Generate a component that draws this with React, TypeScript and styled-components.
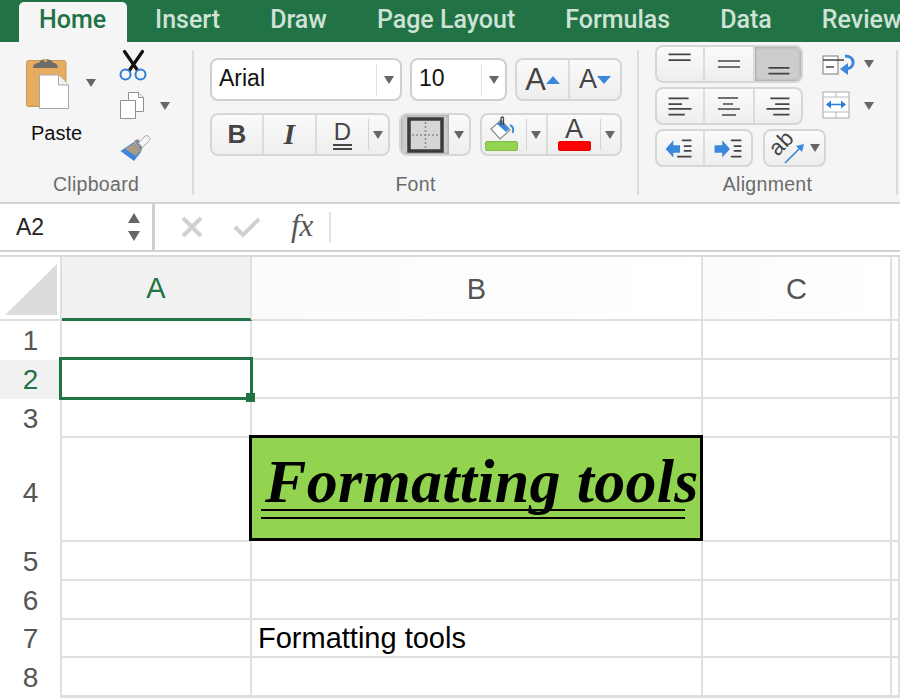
import React, { FC, Fragment } from 'react';
import styled, { createGlobalStyle } from 'styled-components';

const green = '#217346';
const UI_FONT = '"Liberation Sans", Arial, sans-serif';

const GlobalStyle = createGlobalStyle`
    html, body {
        margin: 0;
        padding: 0;
        background: #fff;
    }
    * {
        box-sizing: border-box;
    }
`;

const Page = styled.div`
    width: 900px;
    height: 698px;
    overflow: hidden;
    display: flex;
    flex-direction: column;
    font-family: ${UI_FONT};
    background: #fff;
`;

/* tabs */
const TabBar = styled.div`
    height: 42px;
    flex: none;
    background: ${green};
    display: flex;
    align-items: flex-end;
    padding-left: 19px;
    white-space: nowrap;
`;

const Tab = styled.div<{ $active?: boolean }>`
    height: ${p => (p.$active ? '40px' : '42px')};
    line-height: ${p => (p.$active ? '35px' : '40px')};
    font-family: Roboto, ${UI_FONT};
    font-size: 25px;
    font-weight: 500;
    flex: none;
    padding: 0 ${p => (p.$active ? '21px 0 20px' : '0')};
    margin-right: ${p => (p.$active ? '28px' : '50px')};
    color: ${p => (p.$active ? green : '#cfe2d6')};
    background: ${p => (p.$active ? '#f5f5f5' : 'transparent')};
    border-radius: ${p => (p.$active ? '5px 5px 0 0' : '0')};
`;

/* ribbon */
const Ribbon = styled.div`
    height: 162px;
    flex: none;
    display: flex;
    background: #f5f5f5;
    border-bottom: 2px solid #d2d2d2;
`;

const Group = styled.div<{ $width: number }>`
    width: ${p => p.$width}px;
    flex: none;
    display: flex;
    flex-direction: column;
    position: relative;
    padding-bottom: 6px;
    &::after {
        content: '';
        position: absolute;
        right: 0;
        top: 8px;
        bottom: 7px;
        width: 2px;
        background: #dcdcdc;
    }
`;

const GroupBody = styled.div<{ $top: number; $left: number }>`
    flex: 1;
    min-height: 0;
    padding: ${p => p.$top}px 0 0 ${p => p.$left}px;
    display: flex;
`;

const GroupLabel = styled.div`
    height: 24px;
    line-height: 24px;
    font-size: 19.5px;
    color: #6b6b6b;
    text-align: center;
    padding-right: 2px;
    letter-spacing: 0.3px;
`;

const PasteColumn = styled.div`
    width: 93px;
    flex: none;
    display: flex;
    flex-direction: column;
`;

const PasteTop = styled.div`
    display: flex;
    align-items: center;
    gap: 16px;
`;

const PasteLabel = styled.div`
    width: 61px;
    margin-top: 12px;
    font-size: 20px;
    line-height: 22px;
    color: #111;
    text-align: center;
`;

const SmallTools = styled.div`
    display: flex;
    flex-direction: column;
    margin-top: -6px;
`;

const SmallToolRow = styled.div<{ $top: number }>`
    display: flex;
    align-items: center;
    gap: 15px;
    margin-top: ${p => p.$top}px;
`;

const Stack = styled.div<{ $gap: number; $width?: number }>`
    display: flex;
    flex-direction: column;
    align-items: flex-start;
    gap: ${p => p.$gap}px;
    ${p => (p.$width ? `width: ${p.$width}px; flex: none;` : '')}
`;

const Row = styled.div<{ $gap: number }>`
    display: flex;
    gap: ${p => p.$gap}px;
`;

const Select = styled.div<{ $width: number }>`
    width: ${p => p.$width}px;
    height: 43px;
    background: #fff;
    border: 2px solid #cfcfcf;
    border-radius: 8px;
    display: flex;
    align-items: center;
    padding-left: 7px;
    font-size: 23px;
    color: #111;
`;

const SelectValue = styled.div`
    flex: 1;
    padding-bottom: 3px;
`;

const SelectArrow = styled.div`
    width: 24px;
    height: 32px;
    flex: none;
    border-left: 1px solid #e2e2e2;
    display: flex;
    align-items: center;
    justify-content: center;
`;

const ButtonGroup = styled.div<{ $height: number }>`
    height: ${p => p.$height}px;
    display: flex;
    flex: none;
    border: 2px solid #d6d6d6;
    border-radius: 8px;
    overflow: hidden;
    background: linear-gradient(#fafafa, #eeeeee);
`;

const ToolButton = styled.div<{ $width: number; $active?: boolean; $divider?: boolean }>`
    width: ${p => p.$width}px;
    flex: none;
    display: flex;
    align-items: center;
    justify-content: center;
    position: relative;
    background: ${p => (p.$active ? '#cdcdcd' : 'transparent')};
    box-shadow: ${p => (p.$active ? 'inset 0 0 3px #8a8a8a' : 'none')};
    border-right: ${p => (p.$divider ? '2px solid #dcdcdc' : 'none')};
    color: #444;
`;

const CaretPart = styled(ToolButton)`
    &::before {
        content: '';
        position: absolute;
        left: 0;
        top: 4px;
        bottom: 4px;
        width: 1px;
        background: #d4d4d4;
    }
`;

const Caret = styled.span<{ $size?: number; $shift?: number }>`
    display: inline-block;
    flex: none;
    width: 0;
    height: 0;
    margin-top: ${p => p.$shift ?? 0}px;
    border-left: ${p => (p.$size ?? 10) / 2}px solid transparent;
    border-right: ${p => (p.$size ?? 10) / 2}px solid transparent;
    border-top: ${p => ((p.$size ?? 10) * 4) / 5}px solid #666;
`;

const BoldGlyph = styled.span`
    font-size: 26px;
    font-weight: 700;
    color: #444;
`;

const ItalicGlyph = styled.span`
    font-family: "Liberation Serif", serif;
    font-size: 29px;
    font-weight: 700;
    font-style: italic;
    color: #444;
`;

const UnderGlyph = styled.span`
    font-size: 24px;
    line-height: 23px;
    height: 30px;
    width: 19px;
    text-align: center;
    color: #444;
    border-bottom: 6px double #444;
`;

const GrowGlyph = styled.span<{ $size: number }>`
    font-size: ${p => p.$size}px;
    color: #444;
    line-height: 1;
`;

const ColorTool = styled.div<{ $right?: number }>`
    display: flex;
    flex-direction: column;
    align-items: center;
    justify-content: flex-end;
    height: 100%;
    padding-bottom: 3px;
    margin-right: ${p => p.$right ?? 0}px;
`;

const ColorBar = styled.div<{ $color: string; $border: string }>`
    width: 33px;
    height: 10px;
    border-radius: 2px;
    flex: none;
    background: ${p => p.$color};
    border: 1px solid ${p => p.$border};
`;

const FontColorGlyph = styled.span`
    font-size: 27px;
    line-height: 24px;
    color: #444;
`;

const SideTools = styled.div`
    display: flex;
    flex-direction: column;
    padding-top: 9px;
    gap: 13px;
`;

const SideTool = styled.div`
    display: flex;
    align-items: center;
`;

const SideIcon = styled.div`
    width: 42px;
    flex: none;
    display: flex;
`;

/* formula bar */
const FormulaBar = styled.div`
    height: 48px;
    flex: none;
    display: flex;
    background: #fff;
    border-bottom: 2px solid #d2d2d2;
`;

const NameBox = styled.div`
    width: 155px;
    flex: none;
    display: flex;
    align-items: center;
    justify-content: space-between;
    padding: 0 12px 0 16px;
    font-size: 23px;
    color: #222;
    border-right: 3px solid #cfcfcf;
`;

const Spinner = styled.div`
    display: flex;
    flex-direction: column;
    gap: 8px;
`;

const SpinUp = styled(Caret)`
    transform: rotate(180deg);
`;

const FormulaButtons = styled.div`
    display: flex;
    align-items: center;
    padding-left: 26px;
    gap: 30px;
`;

const FxLabel = styled.div`
    font-family: "Liberation Serif", serif;
    font-style: italic;
    font-size: 31px;
    color: #555;
    width: 40px;
    height: 30px;
    line-height: 28px;
    border-right: 2px solid #e2e2e2;
`;

/* sheet */
const GapLine = styled.div`
    height: 3px;
    flex: none;
    background: #fff;
`;

const Sheet = styled.div`
    flex: 1;
    display: grid;
    grid-template-columns: 62px 190px 451px 189px 1fr;
    grid-template-rows: 64px 39px 39px 39px 104px 39px 39px 38px 39px 1fr;
    border-top: 2px solid #d9d9d9;
`;

const Corner = styled.div`
    border-right: 2px solid #e0e0e0;
    border-bottom: 2px solid #e0e0e0;
    background: #fff;
    display: flex;
    align-items: flex-end;
    justify-content: center;
    padding: 0 3px 4px 5px;
`;

const ColumnHead = styled.div<{ $active?: boolean }>`
    display: flex;
    align-items: center;
    justify-content: center;
    font-size: 29px;
    padding-top: 2px;
    color: ${p => (p.$active ? green : '#555')};
    background: ${p => (p.$active ? '#f1f1f1' : 'linear-gradient(90deg, #fbfbfb, #fff)')};
    border-right: 2px solid #e0e0e0;
    border-bottom: ${p => (p.$active ? `3px solid ${green}` : '2px solid #e0e0e0')};
`;

const RowHead = styled.div<{ $active?: boolean; $tall?: boolean }>`
    display: flex;
    align-items: center;
    justify-content: center;
    font-size: 28px;
    padding: ${p => (p.$tall ? '6px' : '0')} 0 0 1px;
    color: ${p => (p.$active ? green : '#555')};
    background: ${p => (p.$active ? '#f1f1f1' : '#fff')};
    border-right: 2px solid #e0e0e0;
`;

const Cell = styled.div`
    position: relative;
    border-right: 2px solid #e0e0e0;
    border-bottom: 2px solid #e0e0e0;
    display: flex;
    align-items: center;
    font-size: 29px;
    color: #000;
    padding-left: 6px;
    white-space: nowrap;
`;

const SelectedCell = styled(Cell)`
    border: 3px solid ${green};
    margin: -3px -1px -1px -3px;
    background: #fff;
    z-index: 2;
`;

const FillHandle = styled.span`
    position: absolute;
    right: -5px;
    bottom: -5px;
    width: 9px;
    height: 9px;
    background: ${green};
`;

const FormattedCell = styled(Cell)`
    background: #92d350;
    border: 3px solid #000;
    margin: -3px 0 1px -3px;
    z-index: 1;
    padding: 0 0 14px 13px;
    font-family: "Liberation Serif", serif;
    font-style: italic;
    font-weight: 700;
    font-size: 62px;
    letter-spacing: 0.3px;
    &::after {
        content: '';
        position: absolute;
        left: 9px;
        top: 71px;
        width: 424px;
        height: 6px;
        border-top: 2px solid #000;
        border-bottom: 2px solid #000;
    }
`;

/* icons */
const PasteIcon: FC = () => (
    <svg width="44" height="55" viewBox="26 55 44 55">
        <rect x="26.500" y="60.500" width="39.500" height="46" rx="2" fill="#e6ad62" stroke="#c99a58" />
        <path d="M33 68c0-3 2-5 6-5 1-5 13-5 14 0 3 0 5 2 5 5z" fill="#6d6d6d" />
        <circle cx="45.500" cy="60.500" r="1.600" fill="#e6ad62" />
        <path d="M39.500 75h19l10 10v23.500h-29z" fill="#fff" stroke="#a8a8a8" />
        <path d="M58.500 75v10h10" fill="#f2f2f2" stroke="#a8a8a8" />
    </svg>
);

const ScissorsIcon: FC = () => (
    <svg width="30" height="32" viewBox="120 48 30 32">
        <path d="M125.500 50.500 L139 70 M143.500 50.500 L130 70" stroke="#111" strokeWidth="3.200" strokeLinecap="round" />
        <circle cx="126.500" cy="73.500" r="5" fill="#f5f5f5" stroke="#2f7fd6" strokeWidth="2" />
        <circle cx="141.500" cy="73.500" r="5" fill="#f5f5f5" stroke="#2f7fd6" strokeWidth="2" />
    </svg>
);

const CopyIcon: FC = () => (
    <svg width="26" height="29" viewBox="121 92 26 29">
        <path d="M130.500 93.500h10l5 5v14h-15z" fill="#fff" stroke="#8f8f8f" />
        <path d="M140.500 93.500v5h5" fill="#f0f0f0" stroke="#8f8f8f" />
        <path d="M122.500 101.500h15v18h-15z" fill="#fff" stroke="#8f8f8f" />
    </svg>
);

const BrushIcon: FC = () => (
    <svg width="32" height="29" viewBox="118 135 32 29">
        <path d="M119.500 151 L133 142 L140 152 L133 161 Z" fill="#3f86d8" />
        <path d="M124 149 L133 143 L139 151 L135 156 Z" fill="#a99b83" />
        <path d="M133 141 L137 139 L142 146 L140 152 Z" fill="#8a8a8a" />
        <path d="M137.500 143 L144 136 C147 134.500 150 138 148.500 140.500 L141.500 147.500 Z" fill="#f6f6f6" stroke="#a5a5a5" />
    </svg>
);

const BorderIcon: FC = () => (
    <svg width="37" height="36" viewBox="0 0 37 36">
        <rect x="2" y="2" width="33" height="32" fill="#d6d6d6" stroke="#3b3b3b" strokeWidth="3.500" />
        <path d="M18.500 5v26M5 18h27" stroke="#8d8d8d" strokeWidth="1.500" strokeDasharray="2 2" />
    </svg>
);

const SizeTriangle: FC<{ up?: boolean }> = ({ up }) => (
    <svg width="14" height="8" viewBox="0 0 14 8">
        <path d={up ? 'M7 0l7 8H0z' : 'M0 0h14L7 8z'} fill="#3b87dc" />
    </svg>
);

const BucketIcon: FC = () => (
    <svg width="26" height="25" viewBox="0 0 26 25">
        <path d="M2 13 L12 4 L21 14 L11 23 Z" fill="#fff" stroke="#8a8a8a" strokeWidth="1.200" />
        <path d="M8 8 L12 5 L20 13 L17 16 Z" fill="#3b87dc" />
        <path d="M12 9V2.500c0-2 2.500-2 2.500 0V9" fill="none" stroke="#444" strokeWidth="1.300" />
        <path d="M21 9c3 1 4 5 2.500 8" fill="none" stroke="#3b87dc" strokeWidth="2" />
    </svg>
);

type Line = [number, number, number];

const Lines: FC<{ lines: Line[] }> = ({ lines }) => (
    <svg width="48" height="34" viewBox="0 0 48 34">
        {lines.map(([x1, x2, y], i) => (
            <path key={i} d={`M${x1} ${y}H${x2}`} stroke="#444" strokeWidth="1.700" />
        ))}
    </svg>
);

const IndentIcon: FC<{ right?: boolean }> = ({ right }) => (
    <svg width="48" height="34" viewBox="0 0 48 34">
        <path d={right ? 'M27 9h11M30 15h8M30 20h8M27 26h11' : 'M26 9h10M28 15h8M28 20h8M21 26h15'} stroke="#444" strokeWidth="1.700" />
        <path d={right ? 'M10 14h8v-5l8 9-8 9v-5h-8z' : 'M24 14h-7v-5l-8 9 8 9v-5h7z'} fill="#3b87dc" />
    </svg>
);

const WrapIcon: FC = () => (
    <svg width="34" height="24" viewBox="0 0 34 24">
        <rect x="1" y="2" width="15" height="18" fill="#fff" stroke="#7a7a7a" />
        <path d="M1 6h21M4 13h8" stroke="#444" strokeWidth="1.500" />
        <path d="M23 2c10 0 11 11 2 13" fill="none" stroke="#3b87dc" strokeWidth="3" />
        <path d="M26 9 L18 15 L26 21 Z" fill="#3b87dc" />
    </svg>
);

const MergeIcon: FC = () => (
    <svg width="28" height="28" viewBox="0 0 28 28">
        <rect x="1" y="1" width="26" height="26" fill="#fff" stroke="#a8a8a8" />
        <path d="M1 6h26M1 21h26M14 1v5M14 21v6" stroke="#b8b8b8" />
        <path d="M6 13.500h16" stroke="#2f7fd6" strokeWidth="1.600" />
        <path d="M9 9.500L4 13.500L9 17.500zM19 9.500L24 13.500L19 17.500z" fill="#2f7fd6" />
    </svg>
);

const OrientIcon: FC = () => (
    <svg width="40" height="36" viewBox="0 0 40 36">
        <text x="16" y="20" textAnchor="middle" transform="rotate(-45 16 14)" fontFamily="Liberation Sans" fontSize="22" fill="#444">ab</text>
        <path d="M19 33L36 16" stroke="#3b87dc" strokeWidth="1.700" />
        <path d="M38 14l-8 2 6 6z" fill="#3b87dc" />
    </svg>
);

const CrossIcon: FC = () => (
    <svg width="22" height="22" viewBox="0 0 22 22">
        <path d="M2 2L20 20M20 2L2 20" stroke="#d0d0d0" strokeWidth="4" />
    </svg>
);

const CheckIcon: FC = () => (
    <svg width="28" height="22" viewBox="0 0 28 22">
        <path d="M2 11l8 8L26 3" fill="none" stroke="#d0d0d0" strokeWidth="4" />
    </svg>
);

const CornerIcon: FC = () => (
    <svg width="52" height="51" viewBox="0 0 52 51">
        <path d="M52 0V51H0z" fill="#dcdcdc" />
    </svg>
);

const tabs = ['Insert', 'Draw', 'Page Layout', 'Formulas', 'Data', 'Review'];
const rows = [1, 2, 3, 4, 5, 6, 7, 8, 9];

const renderCells = (row: number) => {
    if (row === 2) {
        return (
            <>
                <SelectedCell><FillHandle /></SelectedCell>
                <Cell /><Cell /><Cell />
            </>
        );
    }
    if (row === 4) {
        return (
            <>
                <Cell />
                <FormattedCell>Formatting tools</FormattedCell>
                <Cell /><Cell />
            </>
        );
    }
    if (row === 7) {
        return (
            <>
                <Cell />
                <Cell>Formatting tools</Cell>
                <Cell /><Cell />
            </>
        );
    }
    return (
        <>
            <Cell /><Cell /><Cell /><Cell />
        </>
    );
};

const App: FC = () => {
    return (
        <Page>
            <GlobalStyle />
            <TabBar>
                <Tab $active>Home</Tab>
                {tabs.map(t => <Tab key={t}>{t}</Tab>)}
            </TabBar>

            <Ribbon>
                <Group $width={194}>
                    <GroupBody $top={13} $left={26}>
                        <PasteColumn>
                            <PasteTop>
                                <PasteIcon />
                                <Caret $size={10} />
                            </PasteTop>
                            <PasteLabel>Paste</PasteLabel>
                        </PasteColumn>
                        <SmallTools>
                            <ScissorsIcon />
                            <SmallToolRow $top={10}>
                                <CopyIcon />
                                <Caret $size={10} />
                            </SmallToolRow>
                            <SmallToolRow $top={15}>
                                <BrushIcon />
                            </SmallToolRow>
                        </SmallTools>
                    </GroupBody>
                    <GroupLabel>Clipboard</GroupLabel>
                </Group>

                <Group $width={445}>
                    <GroupBody $top={16} $left={16}>
                        <Stack $gap={12}>
                            <Row $gap={8}>
                                <Select $width={192}>
                                    <SelectValue>Arial</SelectValue>
                                    <SelectArrow><Caret $size={10} /></SelectArrow>
                                </Select>
                                <Select $width={97}>
                                    <SelectValue>10</SelectValue>
                                    <SelectArrow><Caret $size={10} /></SelectArrow>
                                </Select>
                                <ButtonGroup $height={43}>
                                    <ToolButton $width={53} $divider>
                                        <GrowGlyph $size={31}>A</GrowGlyph>
                                        <SizeTriangle up />
                                    </ToolButton>
                                    <ToolButton $width={50}>
                                        <GrowGlyph $size={27}>A</GrowGlyph>
                                        <SizeTriangle />
                                    </ToolButton>
                                </ButtonGroup>
                            </Row>
                            <Row $gap={9}>
                                <ButtonGroup $height={43}>
                                    <ToolButton $width={52} $divider><BoldGlyph>B</BoldGlyph></ToolButton>
                                    <ToolButton $width={53} $divider><ItalicGlyph>I</ItalicGlyph></ToolButton>
                                    <ToolButton $width={51}><UnderGlyph>D</UnderGlyph></ToolButton>
                                    <CaretPart $width={20}><Caret $size={10} /></CaretPart>
                                </ButtonGroup>
                                <ButtonGroup $height={43}>
                                    <ToolButton $width={48} $active><BorderIcon /></ToolButton>
                                    <ToolButton $width={20}><Caret $size={10} /></ToolButton>
                                </ButtonGroup>
                                <ButtonGroup $height={43}>
                                    <ToolButton $width={44}>
                                        <ColorTool $right={5}>
                                            <BucketIcon />
                                            <ColorBar $color="#92d350" $border="#82bb48" />
                                        </ColorTool>
                                    </ToolButton>
                                    <CaretPart $width={22} $divider><Caret $size={10} /></CaretPart>
                                    <ToolButton $width={52}>
                                        <ColorTool>
                                            <FontColorGlyph>A</FontColorGlyph>
                                            <ColorBar $color="#fe0000" $border="#e00000" />
                                        </ColorTool>
                                    </ToolButton>
                                    <CaretPart $width={20}><Caret $size={10} /></CaretPart>
                                </ButtonGroup>
                            </Row>
                        </Stack>
                    </GroupBody>
                    <GroupLabel>Font</GroupLabel>
                </Group>

                <Group $width={259}>
                    <GroupBody $top={3} $left={16}>
                        <Stack $gap={4} $width={167}>
                            <ButtonGroup $height={38}>
                                <ToolButton $width={48} $divider><Lines lines={[[12, 35, 7], [12, 35, 13]]} /></ToolButton>
                                <ToolButton $width={50} $divider><Lines lines={[[13, 35, 14], [13, 35, 20]]} /></ToolButton>
                                <ToolButton $width={46} $active><Lines lines={[[14, 36, 21], [14, 36, 27]]} /></ToolButton>
                            </ButtonGroup>
                            <ButtonGroup $height={38}>
                                <ToolButton $width={48} $divider><Lines lines={[[12, 33, 9], [12, 26, 15], [12, 36, 20], [12, 29, 26]]} /></ToolButton>
                                <ToolButton $width={50} $divider><Lines lines={[[13, 33, 9], [18, 28, 15], [13, 35, 20], [17, 31, 26]]} /></ToolButton>
                                <ToolButton $width={46}><Lines lines={[[16, 36, 9], [21, 36, 15], [12, 36, 20], [19, 36, 26]]} /></ToolButton>
                            </ButtonGroup>
                            <Row $gap={10}>
                                <ButtonGroup $height={38}>
                                    <ToolButton $width={48} $divider><IndentIcon /></ToolButton>
                                    <ToolButton $width={46}><IndentIcon right /></ToolButton>
                                </ButtonGroup>
                                <ButtonGroup $height={38}>
                                    <ToolButton $width={41}><OrientIcon /></ToolButton>
                                    <ToolButton $width={18}><Caret $size={10} /></ToolButton>
                                </ButtonGroup>
                            </Row>
                        </Stack>
                        <SideTools>
                            <SideTool><SideIcon><WrapIcon /></SideIcon><Caret $size={10} $shift={-4} /></SideTool>
                            <SideTool><SideIcon><MergeIcon /></SideIcon><Caret $size={10} $shift={2} /></SideTool>
                        </SideTools>
                    </GroupBody>
                    <GroupLabel>Alignment</GroupLabel>
                </Group>
            </Ribbon>

            <FormulaBar>
                <NameBox>
                    A2
                    <Spinner>
                        <SpinUp $size={13} />
                        <Caret $size={13} />
                    </Spinner>
                </NameBox>
                <FormulaButtons>
                    <CrossIcon />
                    <CheckIcon />
                    <FxLabel>fx</FxLabel>
                </FormulaButtons>
            </FormulaBar>
            <GapLine />

            <Sheet>
                <Corner><CornerIcon /></Corner>
                <ColumnHead $active>A</ColumnHead>
                <ColumnHead>B</ColumnHead>
                <ColumnHead>C</ColumnHead>
                <ColumnHead />
                {rows.map(r => (
                    <Fragment key={r}>
                        <RowHead $active={r === 2} $tall={r === 4}>{r < 9 ? r : ''}</RowHead>
                        {renderCells(r)}
                    </Fragment>
                ))}
            </Sheet>
        </Page>
    );
};

export default App;
